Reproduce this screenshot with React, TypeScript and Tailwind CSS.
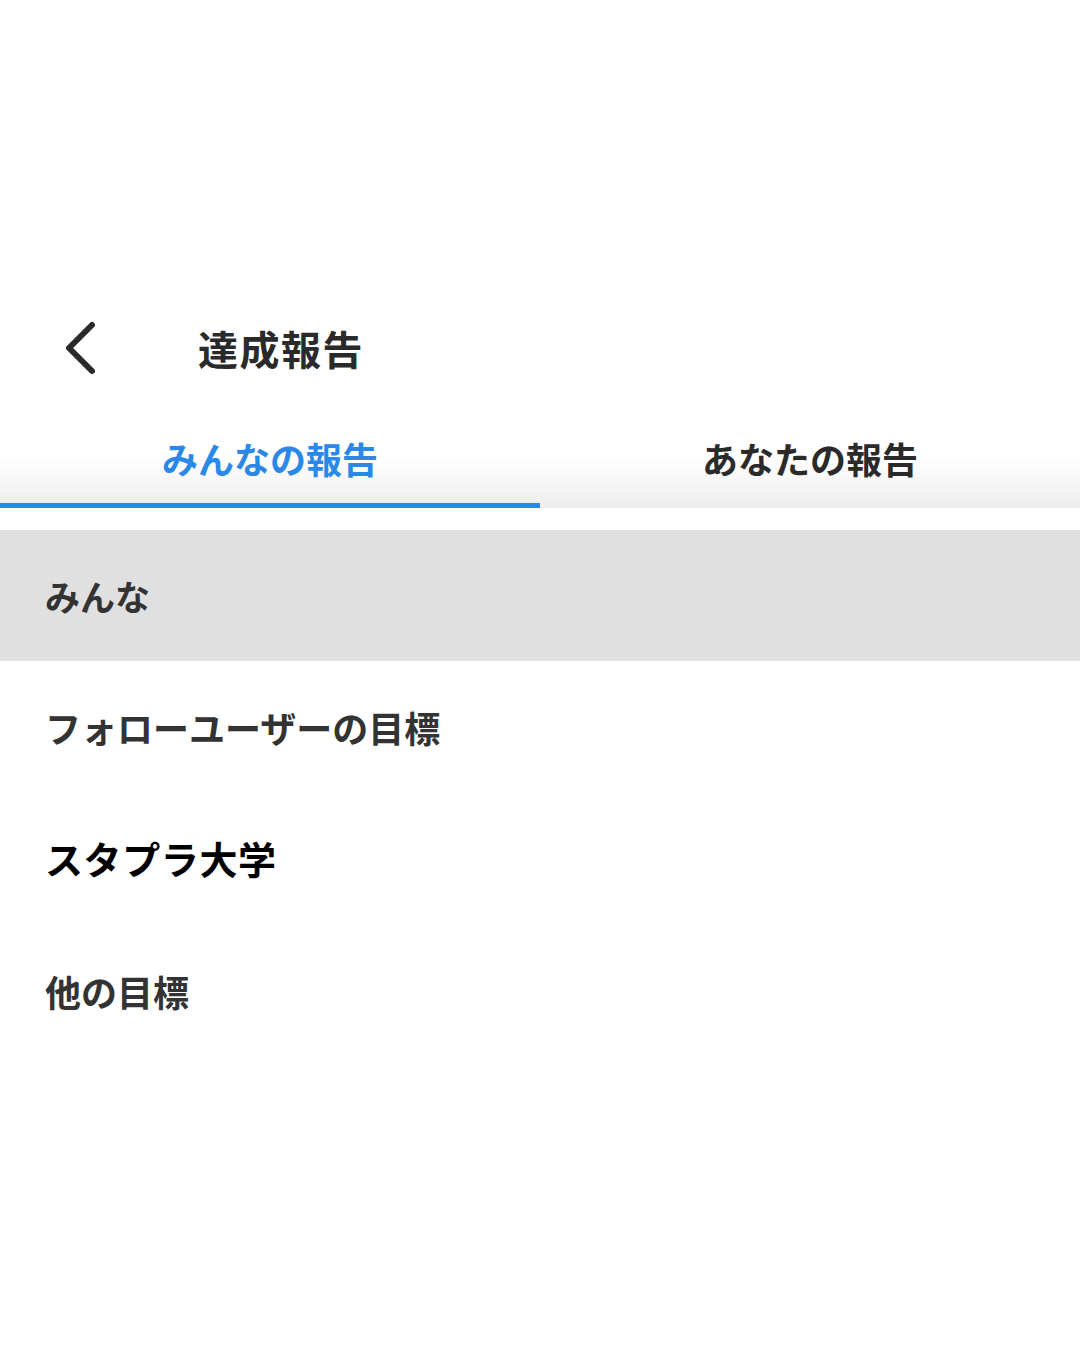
import React, { useState } from "react";

const font = { fontFamily: '"Noto Sans CJK JP", "Noto Sans", sans-serif' };

const items = [
  { label: "みんな", className: "text-[35px] font-bold text-[#333333]" },
  { label: "フォローユーザーの目標", className: "text-[36px] font-bold text-[#333333]" },
  { label: "スタプラ大学", className: "text-[38px] font-bold tracking-[0.6px] text-black" },
  { label: "他の目標", className: "text-[36px] font-bold text-[#333333] translate-y-[2px]" },
];

export default function App() {
  const [tab, setTab] = useState(0);
  const [selected, setSelected] = useState(0);

  return (
    <div className="min-h-[1350px] w-[1080px] bg-white" style={font}>
      {/* status area */}
      <div className="h-[300px]" />

      {/* Header */}
      <div className="flex h-[96px] items-center">
        <button className="ml-[60px] flex h-[56px] w-[40px] items-center justify-center">
          <svg width="34" height="56" viewBox="0 0 34 56" fill="none">
            <path
              d="M29 5 L6 28 L29 51"
              stroke="#2a2a2a"
              strokeWidth="6"
              strokeLinecap="round"
              strokeLinejoin="round"
            />
          </svg>
        </button>
        <h1 className="ml-[98px] text-[40px] font-bold leading-none tracking-[1.5px] text-[#2a2a2a]">
          達成報告
        </h1>
      </div>

      {/* Tabs */}
      <div className="flex h-[112px] bg-linear-to-b from-white from-55% to-[#ededed]">
        {["みんなの報告", "あなたの報告"].map((t, i) => (
          <button
            key={t}
            onClick={() => setTab(i)}
            className="flex flex-1 flex-col items-center justify-end"
          >
            <span
              className={
                "text-[36px] font-bold leading-[44px] " +
                (tab === i ? "text-[#2a88e8]" : "text-[#2a2a2a]")
              }
            >
              {t}
            </span>
            <span
              className={
                "mt-[23px] h-[5px] w-full " + (tab === i ? "bg-[#2a88e8]" : "bg-transparent")
              }
            />
          </button>
        ))}
      </div>

      {/* List */}
      <div className="pt-[22px]">
        {items.map((item, i) => (
          <div
            key={item.label}
            onClick={() => setSelected(i)}
            className={
              "flex h-[131px] items-center pl-[45px] " +
              (selected === i ? "bg-[#e0e0e0]" : "bg-white")
            }
          >
            <span className={item.className + " leading-none"}>{item.label}</span>
          </div>
        ))}
      </div>
    </div>
  );
}
